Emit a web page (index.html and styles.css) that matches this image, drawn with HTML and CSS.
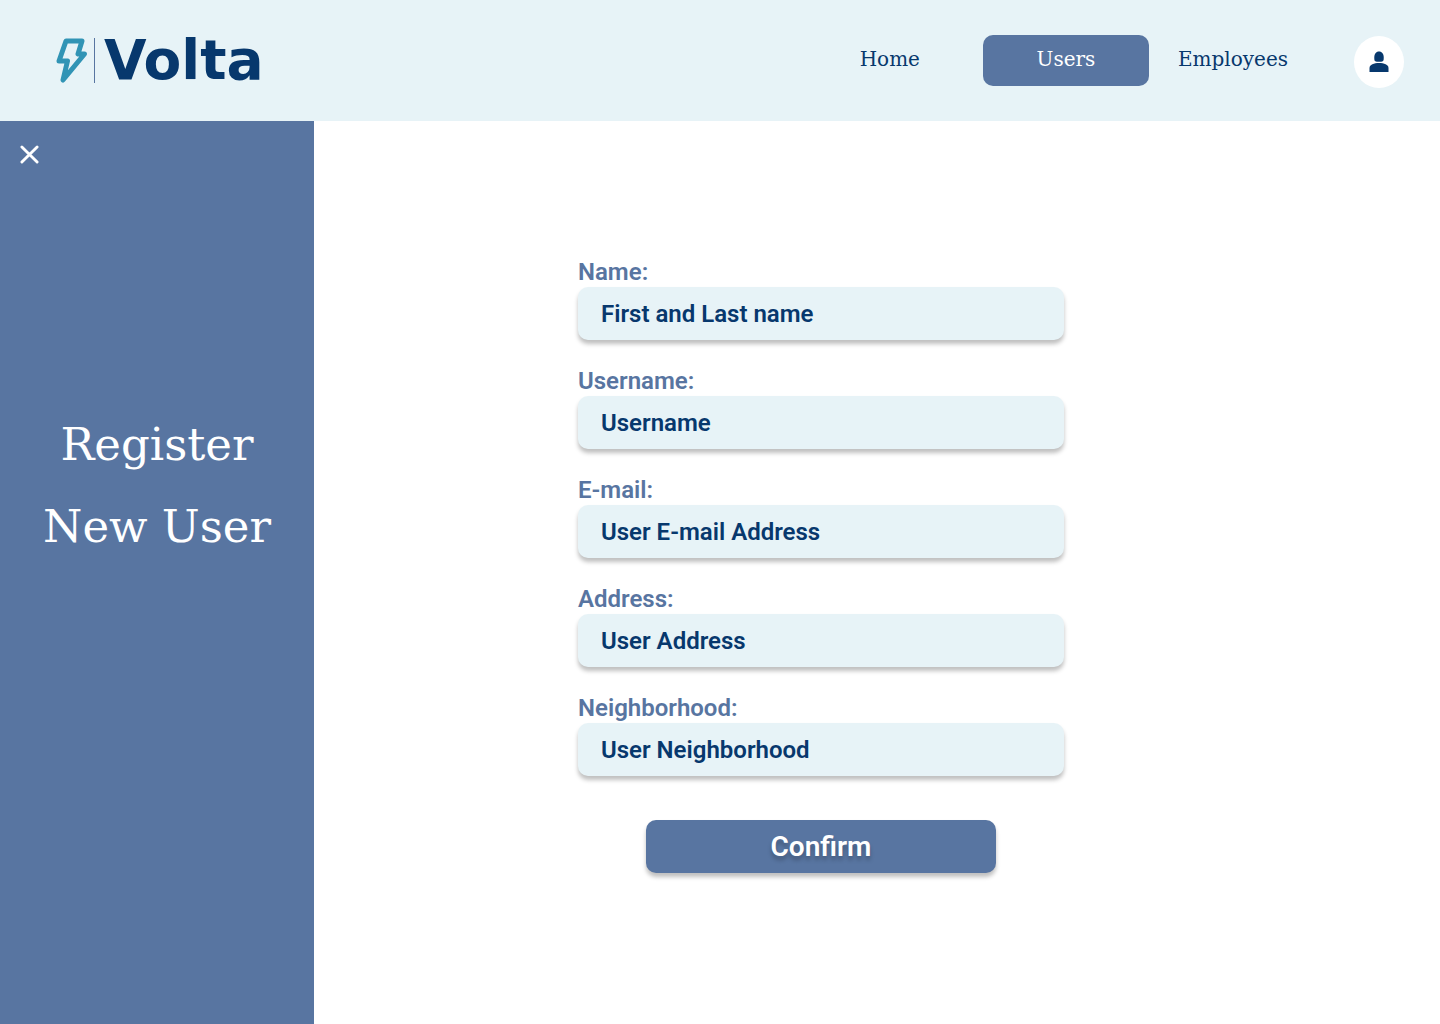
FILE: index.html
```html
<!DOCTYPE html>
<html lang="en">
<head>
  <meta charset="utf-8">
  <meta name="viewport" content="width=device-width, initial-scale=1">
  <title>Volta</title>
  <link rel="stylesheet" href="styles.css">
</head>
<body>
  <header class="topbar">
    <a class="brand" href="#">
      <svg class="brand-bolt" viewBox="0 0 32 45" aria-hidden="true">
        <path d="M10 3H26L22 16H28.500L7 42L11.500 23H3Z"/>
      </svg>
      <span class="brand-name">Volta</span>
    </a>
    <nav class="nav">
      <a class="nav-link" href="#">Home</a>
      <a class="nav-link nav-link-active" href="#" aria-current="page">Users</a>
      <a class="nav-link" href="#">Employees</a>
    </nav>
    <button class="avatar" type="button" aria-label="Profile">
      <svg class="avatar-icon" viewBox="0 0 20 22" aria-hidden="true">
        <path d="M10 0.500C13 0.500 14.700 3 14.700 6.200V8Q14.700 10.800 12 10.800H8Q5.300 10.800 5.300 8V6.200C5.300 3 7 0.500 10 0.500Z"/>
        <path d="M0.500 21V17C0.500 13.500 5 12 10 12S19.500 13.500 19.500 17V21Z"/>
      </svg>
    </button>
  </header>
  <div class="page">
    <aside class="sidebar">
      <button class="close" type="button" aria-label="Close">
        <svg class="close-icon" viewBox="0 0 20 20" aria-hidden="true">
          <path d="M2 2L18 18M18 2L2 18"/>
        </svg>
      </button>
      <h1 class="title">Register<br>New User</h1>
    </aside>
    <main class="content">
      <form class="form">
        <div class="field">
          <label class="label" for="name">Name:</label>
          <input class="input" id="name" type="text" placeholder="First and Last name">
        </div>
        <div class="field">
          <label class="label" for="username">Username:</label>
          <input class="input" id="username" type="text" placeholder="Username">
        </div>
        <div class="field">
          <label class="label" for="email">E-mail:</label>
          <input class="input" id="email" type="email" placeholder="User E-mail Address">
        </div>
        <div class="field">
          <label class="label" for="address">Address:</label>
          <input class="input" id="address" type="text" placeholder="User Address">
        </div>
        <div class="field">
          <label class="label" for="neighborhood">Neighborhood:</label>
          <input class="input" id="neighborhood" type="text" placeholder="User Neighborhood">
        </div>
        <button class="confirm" type="submit">Confirm</button>
      </form>
    </main>
  </div>
</body>
</html>
```
FILE: styles.css
```css
:root {
  --navy: #07386d;
  --blue: #5875a1;
  --ice: #e7f3f7;
  --teal: #3194b5;
}

* {
  box-sizing: border-box;
}

body {
  margin: 0;
  min-height: 100vh;
  display: flex;
  flex-direction: column;
  background: #fff;
  font-family: Roboto, sans-serif;
}

.topbar {
  display: flex;
  align-items: flex-start;
  padding: 35px 36px 33px 56px;
  background: var(--ice);
}

.brand {
  display: flex;
  align-items: center;
  margin-top: 3px;
  margin-right: auto;
  color: var(--navy);
  text-decoration: none;
}

.brand-bolt {
  width: 32px;
  height: 45px;
  fill: none;
  stroke: var(--teal);
  stroke-width: 5;
  stroke-linejoin: round;
}

.brand-name {
  margin-left: 6px;
  padding-left: 9px;
  border-left: 1px solid var(--blue);
  font: bold 55px/45px "DejaVu Sans", sans-serif;
}

.nav {
  display: flex;
  align-items: center;
}

.nav-link {
  padding: 12px 29px 15px;
  color: var(--navy);
  font: 20px/24px "DejaVu Serif", serif;
  text-align: center;
  text-decoration: none;
}

.nav-link:first-child {
  padding-right: 63px;
}

.nav-link-active {
  min-width: 166px;
  border-radius: 10px;
  background: var(--blue);
  color: #fff;
}

.avatar {
  display: grid;
  place-items: center;
  width: 50px;
  height: 52px;
  margin-top: 1px;
  margin-left: 37px;
  padding: 0;
  border: 0;
  border-radius: 50%;
  background: #fff;
}

.avatar-icon {
  width: 20px;
  height: 22px;
  fill: var(--navy);
}

.page {
  flex: 1;
  display: flex;
}

.sidebar {
  flex: 0 0 314px;
  padding: 24px 20px;
  background: var(--blue);
  color: #fff;
}

.close {
  display: block;
  padding: 0;
  border: 0;
  background: none;
}

.close-icon {
  display: block;
  width: 19px;
  height: 19px;
  fill: none;
  stroke: #fff;
  stroke-width: 3;
  stroke-linecap: round;
}

.title {
  margin: 240px 0 0;
  font: 45px/82px "DejaVu Serif", serif;
  text-align: center;
}

.content {
  flex: 1;
  display: flex;
  justify-content: center;
  align-items: flex-start;
  padding: 137px 112px 80px 0;
}

.form {
  display: flex;
  flex-direction: column;
  gap: 27px;
  width: 100%;
  max-width: 486px;
}

.field {
  display: flex;
  flex-direction: column;
  gap: 1px;
}

.label {
  color: var(--blue);
  font-size: 24px;
  font-weight: 600;
  line-height: 28px;
}

.input {
  width: 100%;
  height: 53px;
  padding: 0 23px;
  border: 0;
  border-radius: 10px;
  background: var(--ice);
  box-shadow: 0 4px 4px rgba(0, 0, 0, 0.25);
  color: var(--navy);
  font: 600 24px/28px Roboto, sans-serif;
}

.input::placeholder {
  color: var(--navy);
  opacity: 1;
}

.confirm {
  align-self: center;
  width: 350px;
  max-width: 100%;
  height: 53px;
  margin-top: 17px;
  border: 0;
  border-radius: 10px;
  background: var(--blue);
  box-shadow: 0 4px 4px rgba(0, 0, 0, 0.25);
  color: #fff;
  font: 600 28px/32px Roboto, sans-serif;
  text-shadow: 0 4px 4px rgba(0, 0, 0, 0.25);
}
```
